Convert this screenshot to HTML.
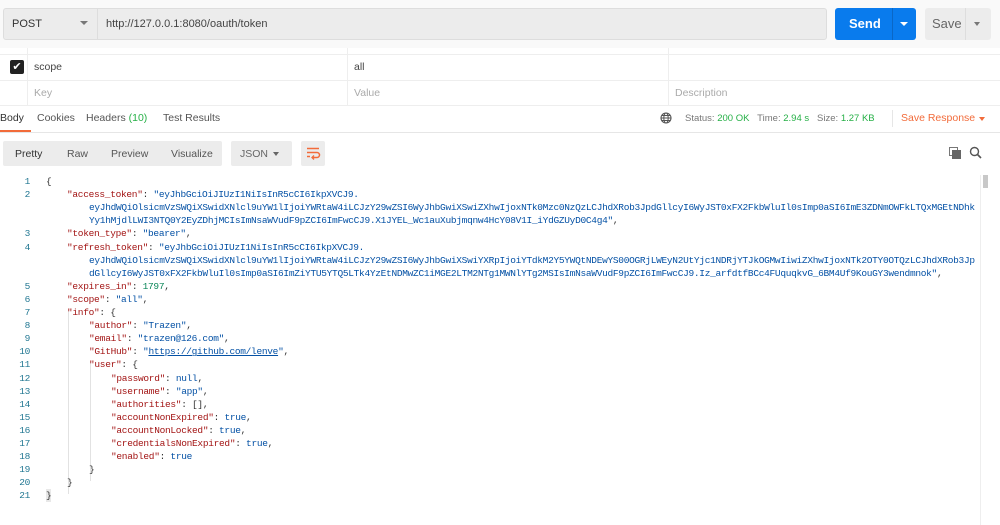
<!DOCTYPE html>
<html><head><meta charset="utf-8"><style>
*{margin:0;padding:0;box-sizing:border-box}
body{width:1000px;height:525px;background:#fff;font-family:"Liberation Sans",sans-serif;position:relative;overflow:hidden;color:#333}
.a{position:absolute}
.top{left:0;top:0;width:1000px;height:48px;background:#f9f9f9}
.code{font-family:"Liberation Mono",monospace;font-size:9.5px;letter-spacing:-0.3px;white-space:pre;line-height:13.1px}
.ln{position:absolute;left:0;top:0;width:30px;text-align:right;color:#237893;font-size:9.5px;line-height:13.1px}
.k{color:#a31515}.s{color:#0451a5}.n{color:#098658}.p{color:#333}
.row{position:absolute;left:0;height:13.1px}
</style></head><body>
<div class="a top"></div>
<div class="a" style="left:3px;top:8px;width:824px;height:32px;background:#ececec;border:1px solid #ddd;border-radius:3px"></div>
<div class="a" style="left:97px;top:8px;width:1px;height:32px;background:#ddd"></div>
<div class="a" style="left:12px;top:18px;font-size:11px;color:#333">POST</div>
<div class="a" style="left:80px;top:21px;border-left:4px solid transparent;border-right:4px solid transparent;border-top:4px solid #777"></div>
<div class="a" style="left:106px;top:18px;font-size:11px;color:#444">http://127.0.0.1:8080/oauth/token</div>
<div class="a" style="left:835px;top:8px;width:81px;height:32px;background:#097bed;border-radius:3px"></div>
<div class="a" style="left:892px;top:8px;width:1px;height:32px;background:#0a67c6"></div>
<div class="a" style="left:849px;top:16px;font-size:13px;color:#fff;font-weight:bold">Send</div>
<div class="a" style="left:900px;top:22px;border-left:4px solid transparent;border-right:4px solid transparent;border-top:4px solid #fff"></div>
<div class="a" style="left:925px;top:8px;width:66px;height:32px;background:#ececec;border-radius:3px"></div>
<div class="a" style="left:965px;top:8px;width:1px;height:32px;background:#ddd"></div>
<div class="a" style="left:932px;top:16px;font-size:13px;color:#666">Save</div>
<div class="a" style="left:974px;top:22px;border-left:3.5px solid transparent;border-right:3.5px solid transparent;border-top:4px solid #777"></div>
<div class="a" style="left:0;top:54px;width:1000px;height:1px;background:#eee"></div>
<div class="a" style="left:0;top:80px;width:1000px;height:1px;background:#eee"></div>
<div class="a" style="left:0;top:105px;width:1000px;height:1px;background:#eee"></div>
<div class="a" style="left:27px;top:48px;width:1px;height:57px;background:#eee"></div>
<div class="a" style="left:347px;top:48px;width:1px;height:57px;background:#eee"></div>
<div class="a" style="left:668px;top:48px;width:1px;height:57px;background:#eee"></div>
<div class="a" style="left:10px;top:60px;width:14px;height:14px;background:#222;border-radius:2px;color:#fff;font-size:11px;line-height:14px;text-align:center">✔</div>
<div class="a" style="left:34px;top:61px;font-size:10.5px;color:#444">scope</div>
<div class="a" style="left:354px;top:61px;font-size:10.5px;color:#444">all</div>
<div class="a" style="left:34px;top:87px;font-size:10.5px;color:#aaa">Key</div>
<div class="a" style="left:354px;top:87px;font-size:10.5px;color:#aaa">Value</div>
<div class="a" style="left:675px;top:87px;font-size:10.5px;color:#aaa">Description</div>
<div class="a" style="left:0;top:132px;width:1000px;height:1px;background:#e6e6e6"></div>
<div class="a" style="left:0;top:130px;width:31px;height:2px;background:#f26b3a"></div>
<div class="a" style="left:0;top:112px;font-size:10.5px;color:#333">Body</div>
<div class="a" style="left:37px;top:112px;font-size:10.5px;color:#555">Cookies</div>
<div class="a" style="left:86px;top:112px;font-size:10.5px;color:#555">Headers <span style="color:#26b047">(10)</span></div>
<div class="a" style="left:163px;top:112px;font-size:10.5px;color:#555">Test Results</div>
<svg class="a" style="left:660px;top:112px" width="12" height="12" viewBox="0 0 12 12"><circle cx="6" cy="6" r="5" fill="none" stroke="#555" stroke-width="1.1"/><ellipse cx="6" cy="6" rx="2.2" ry="5" fill="none" stroke="#555"/><path d="M1 6h10M2 3.5h8M2 8.5h8" stroke="#555" stroke-width=".9"/></svg>
<div class="a" style="left:685px;top:113px;font-size:9.5px;color:#777">Status: <span style="color:#26b047">200 OK</span>&nbsp;&nbsp; Time: <span style="color:#26b047">2.94 s</span>&nbsp;&nbsp; Size: <span style="color:#26b047">1.27 KB</span></div>
<div class="a" style="left:892px;top:110px;width:1px;height:17px;background:#e6e6e6"></div>
<div class="a" style="left:901px;top:112px;font-size:10.5px;color:#f26b3a">Save Response</div>
<div class="a" style="left:979px;top:117px;border-left:3.5px solid transparent;border-right:3.5px solid transparent;border-top:4px solid #f26b3a"></div>
<div class="a" style="left:3px;top:141px;width:219px;height:25px;background:#ececec;border-radius:2px"></div>
<div class="a" style="left:15px;top:148px;font-size:10.5px;color:#333">Pretty</div>
<div class="a" style="left:67px;top:148px;font-size:10.5px;color:#555">Raw</div>
<div class="a" style="left:111px;top:148px;font-size:10.5px;color:#555">Preview</div>
<div class="a" style="left:171px;top:148px;font-size:10.5px;color:#555">Visualize</div>
<div class="a" style="left:231px;top:141px;width:61px;height:25px;background:#ececec;border-radius:2px"></div>
<div class="a" style="left:240px;top:148px;font-size:10.5px;color:#666">JSON</div>
<div class="a" style="left:273px;top:152px;border-left:3.5px solid transparent;border-right:3.5px solid transparent;border-top:4px solid #666"></div>
<div class="a" style="left:301px;top:141px;width:24px;height:25px;background:#ececec;border-radius:2px"></div>
<svg class="a" style="left:305px;top:146px" width="16" height="14" viewBox="0 0 16 14"><path d="M2 2.5h12M2 6.5h10a2.5 2.5 0 0 1 0 5H8M2 10.5h3" stroke="#f26b3a" stroke-width="1.5" fill="none"/><path d="M9 9.5l-2 2 2 2" stroke="#f26b3a" stroke-width="1.3" fill="none"/></svg>
<div class="a" style="left:949px;top:147px;width:9px;height:9px;border:1px solid #777;background:#fff"></div>
<div class="a" style="left:952px;top:150px;width:9px;height:9px;background:#666"></div>
<svg class="a" style="left:969px;top:146px" width="13" height="13" viewBox="0 0 13 13"><circle cx="5.5" cy="5.5" r="4" fill="none" stroke="#555" stroke-width="1.4"/><path d="M8.5 8.5l3.5 3.5" stroke="#555" stroke-width="1.6"/></svg>
<div class="a" style="left:980px;top:175px;width:1px;height:350px;background:#eee"></div>
<div class="a" style="left:983px;top:175px;width:5px;height:13px;background:#c8c8c8"></div>
<div class="a" style="left:68px;top:310px;width:1px;height:184px;background:#e2e2e2"></div>
<div class="a" style="left:90px;top:362px;width:1px;height:119px;background:#e2e2e2"></div>
<div class="a code" style="left:0;top:175px;width:980px;height:350px">
<div class="row" style="top:0"><span class="ln">1</span><span class="a p" style="left:46px">{</span></div>
<div class="row" style="top:13.1px"><span class="ln">2</span><span class="a" style="left:67px"><span class="k">"access_token"</span>: <span class="s">"eyJhbGciOiJIUzI1NiIsInR5cCI6IkpXVCJ9.</span></span></div>
<div class="row" style="top:26.2px"><span class="a s" style="left:89px">eyJhdWQiOlsicmVzSWQiXSwidXNlcl9uYW1lIjoiYWRtaW4iLCJzY29wZSI6WyJhbGwiXSwiZXhwIjoxNTk0Mzc0NzQzLCJhdXRob3JpdGllcyI6WyJST0xFX2FkbWluIl0sImp0aSI6ImE3ZDNmOWFkLTQxMGEtNDhk</span></div>
<div class="row" style="top:39.3px"><span class="a" style="left:89px"><span class="s">Yy1hMjdlLWI3NTQ0Y2EyZDhjMCIsImNsaWVudF9pZCI6ImFwcCJ9.X1JYEL_Wc1auXubjmqnw4HcY08V1I_iYdGZUyD0C4g4"</span>,</span></div>
<div class="row" style="top:52.4px"><span class="ln">3</span><span class="a" style="left:67px"><span class="k">"token_type"</span>: <span class="s">"bearer"</span>,</span></div>
<div class="row" style="top:65.5px"><span class="ln">4</span><span class="a" style="left:67px"><span class="k">"refresh_token"</span>: <span class="s">"eyJhbGciOiJIUzI1NiIsInR5cCI6IkpXVCJ9.</span></span></div>
<div class="row" style="top:78.6px"><span class="a s" style="left:89px">eyJhdWQiOlsicmVzSWQiXSwidXNlcl9uYW1lIjoiYWRtaW4iLCJzY29wZSI6WyJhbGwiXSwiYXRpIjoiYTdkM2Y5YWQtNDEwYS00OGRjLWEyN2UtYjc1NDRjYTJkOGMwIiwiZXhwIjoxNTk2OTY0OTQzLCJhdXRob3Jp</span></div>
<div class="row" style="top:91.7px"><span class="a" style="left:89px"><span class="s">dGllcyI6WyJST0xFX2FkbWluIl0sImp0aSI6ImZiYTU5YTQ5LTk4YzEtNDMwZC1iMGE2LTM2NTg1MWNlYTg2MSIsImNsaWVudF9pZCI6ImFwcCJ9.Iz_arfdtfBCc4FUquqkvG_6BM4Uf9KouGY3wendmnok"</span>,</span></div>
<div class="row" style="top:104.8px"><span class="ln">5</span><span class="a" style="left:67px"><span class="k">"expires_in"</span>: <span class="n">1797</span>,</span></div>
<div class="row" style="top:117.9px"><span class="ln">6</span><span class="a" style="left:67px"><span class="k">"scope"</span>: <span class="s">"all"</span>,</span></div>
<div class="row" style="top:131px"><span class="ln">7</span><span class="a" style="left:67px"><span class="k">"info"</span>: {</span></div>
<div class="row" style="top:144.1px"><span class="ln">8</span><span class="a" style="left:89px"><span class="k">"author"</span>: <span class="s">"Trazen"</span>,</span></div>
<div class="row" style="top:157.2px"><span class="ln">9</span><span class="a" style="left:89px"><span class="k">"email"</span>: <span class="s">"trazen@126.com"</span>,</span></div>
<div class="row" style="top:170.3px"><span class="ln">10</span><span class="a" style="left:89px"><span class="k">"GitHub"</span>: <span class="s">"<u>https://github.com/lenve</u>"</span>,</span></div>
<div class="row" style="top:183.4px"><span class="ln">11</span><span class="a" style="left:89px"><span class="k">"user"</span>: {</span></div>
<div class="row" style="top:196.5px"><span class="ln">12</span><span class="a" style="left:111px"><span class="k">"password"</span>: <span class="s">null</span>,</span></div>
<div class="row" style="top:209.6px"><span class="ln">13</span><span class="a" style="left:111px"><span class="k">"username"</span>: <span class="s">"app"</span>,</span></div>
<div class="row" style="top:222.7px"><span class="ln">14</span><span class="a" style="left:111px"><span class="k">"authorities"</span>: [],</span></div>
<div class="row" style="top:235.8px"><span class="ln">15</span><span class="a" style="left:111px"><span class="k">"accountNonExpired"</span>: <span class="s">true</span>,</span></div>
<div class="row" style="top:248.9px"><span class="ln">16</span><span class="a" style="left:111px"><span class="k">"accountNonLocked"</span>: <span class="s">true</span>,</span></div>
<div class="row" style="top:262px"><span class="ln">17</span><span class="a" style="left:111px"><span class="k">"credentialsNonExpired"</span>: <span class="s">true</span>,</span></div>
<div class="row" style="top:275.1px"><span class="ln">18</span><span class="a" style="left:111px"><span class="k">"enabled"</span>: <span class="s">true</span></span></div>
<div class="row" style="top:288.2px"><span class="ln">19</span><span class="a p" style="left:89px">}</span></div>
<div class="row" style="top:301.3px"><span class="ln">20</span><span class="a p" style="left:67px">}</span></div>
<div class="row" style="top:314.4px"><span class="ln">21</span><span class="a p" style="left:46px;background:#e8e8e8">}</span></div>
</div>
</body></html>
